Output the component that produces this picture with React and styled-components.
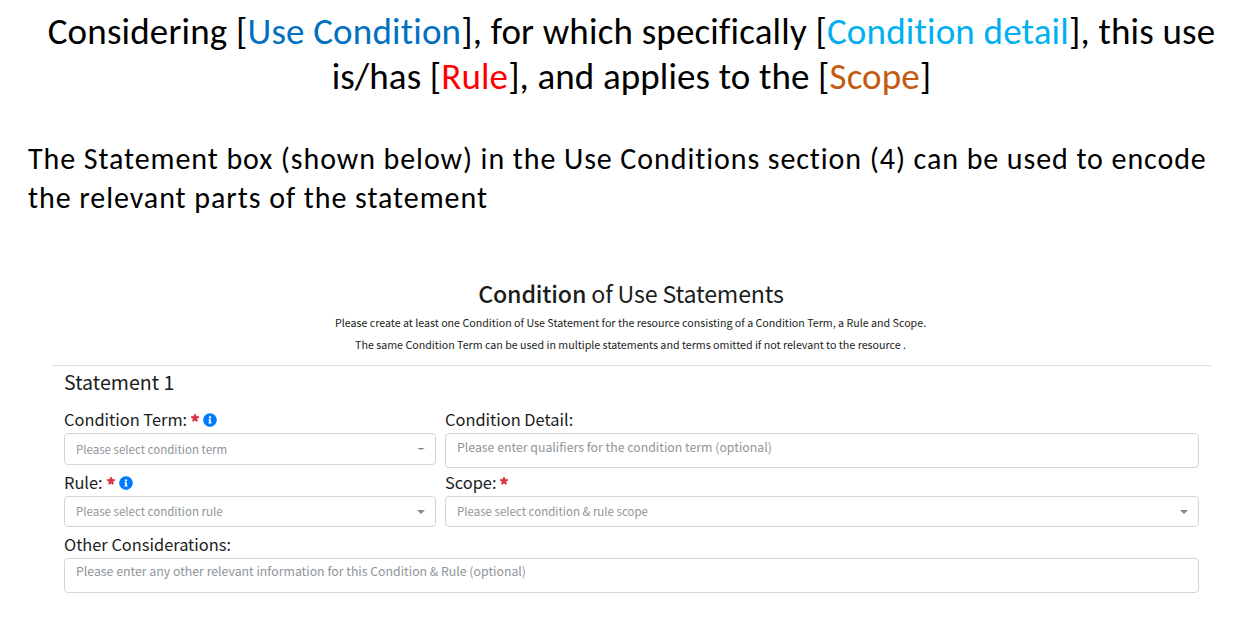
import React from 'react';
import styled, { createGlobalStyle } from 'styled-components';
import { FaInfoCircle } from 'react-icons/fa';

const GlobalStyle = createGlobalStyle`
  * { box-sizing: border-box; }
  body { margin: 0; background: #fff; }
`;

const Page = styled.main`
  width: 1241px;
  height: 618px;
  overflow: hidden;
  background: #fff;
  color: #000;
  font-family: Carlito, Calibri, Lato, sans-serif;
  font-variant-ligatures: none;
`;

const Template = styled.h1`
  margin: 0;
  padding: 9px 0 0 22px;
  font-size: 37px;
  font-weight: 400;
  line-height: 45px;
  text-align: center;
  white-space: nowrap;
`;

const Line = styled.span`
  display: block;
  letter-spacing: ${(p) => p.$spacing || '0'};
`;

const Slot = styled.span`
  color: ${(p) => p.$color};
`;

const Intro = styled.p`
  margin: 40px 0 0;
  padding-left: 28px;
  font-size: 30px;
  line-height: 39px;
  white-space: nowrap;
`;

const Form = styled.section`
  margin: 61px 0 0 52px;
  width: 1159px;
  font-family: 'Noto Sans CJK JP', 'Open Sans', sans-serif;
  color: #1a1d20;
`;

const FormHeader = styled.header`
  height: 88px;
  border-bottom: 1px solid #dedfe0;
  text-align: center;
  white-space: nowrap;
`;

const FormTitle = styled.h2`
  margin: 0 1px 0 0;
  padding-bottom: 3px;
  font-size: 23.2px;
  font-weight: 400;
  line-height: 31px;
  letter-spacing: -0.17px;
`;

const Strong = styled.span`
  font-weight: 500;
`;

const Hint = styled.p`
  margin: 0 2px 0 0;
  font-size: 10.68px;
  line-height: 22px;
`;

const FormBody = styled.div`
  padding: 0 12px;
`;

const StatementTitle = styled.h3`
  margin: 0;
  height: 39px;
  font-size: 19.6px;
  font-weight: 400;
  line-height: 31px;
`;

const Row = styled.div`
  display: grid;
  grid-template-columns: ${(p) => (p.$single ? '1fr' : '372px 1fr')};
  column-gap: 9px;
  align-items: start;
  margin-top: ${(p) => (p.$single ? '3px' : 0)};
`;

const Label = styled.div`
  display: flex;
  align-items: center;
  height: 28px;
  font-size: 16.4px;
  line-height: 28px;
  white-space: nowrap;
`;

const Star = styled.svg`
  width: 8px;
  height: 8px;
  margin: -3px 0 0 4px;
  fill: #dc3545;
`;

const Info = styled(FaInfoCircle)`
  width: 14px;
  height: 14px;
  margin: 2px 0 0 4px;
  color: #007bff;
`;

const Control = styled.div`
  display: flex;
  justify-content: space-between;
  height: ${(p) => p.$height};
  padding: 0 10px 0 11px;
  border: 1px solid #d3d6d9;
  border-radius: 4px;
  color: #8f959a;
  font-size: ${(p) => p.$size};
  line-height: ${(p) => p.$line};
  white-space: nowrap;
`;

const Caret = styled.span`
  align-self: center;
  width: 0;
  height: 0;
  border: solid transparent;
  border-width: ${(p) => (p.$flat ? '2px' : '4px')} 4px 0;
  border-top-color: #8a8a8a;
`;

const Required = () => (
  <Star viewBox="0 0 24 24" aria-hidden="true">
    <path d="M9 1h6l1 6 7-1 1 5-6 3 3 6-5 3-4-4-4 4-5-3 3-6-6-3 1-5 7 1z" />
  </Star>
);

function Select({ label, info, flat, line = '29px', height = '31px', children }) {
  return (
    <div>
      <Label>{label}<Required />{info && <Info />}</Label>
      <Control $height={height} $size="11.5px" $line={line}>
        {children}
        <Caret $flat={flat} />
      </Control>
    </div>
  );
}

function TextField({ label, line = '26px', children }) {
  return (
    <div>
      <Label>{label}</Label>
      <Control $height="35px" $size="12.32px" $line={line}>{children}</Control>
    </div>
  );
}

export default function App() {
  return (
    <Page>
      <GlobalStyle />
      <Template>
        <Line $spacing="0.18px">
          Considering [<Slot $color="#0070c0">Use Condition</Slot>], for which specifically [
          <Slot $color="#00b0f0">Condition detail</Slot>], this use
        </Line>
        <Line $spacing="0.12px">
          is/has [<Slot $color="#ff0000">Rule</Slot>], and applies to the [
          <Slot $color="#c55a11">Scope</Slot>]
        </Line>
      </Template>
      <Intro>
        <Line $spacing="0.92px">The Statement box (shown below) in the Use Conditions section (4) can be used to encode</Line>
        <Line $spacing="0.95px">the relevant parts of the statement</Line>
      </Intro>
      <Form>
        <FormHeader>
          <FormTitle><Strong>Condition</Strong> of Use Statements</FormTitle>
          <Hint>Please create at least one Condition of Use Statement for the resource consisting of a Condition Term, a Rule and Scope.</Hint>
          <Hint>The same Condition Term can be used in multiple statements and terms omitted if not relevant to the resource .</Hint>
        </FormHeader>
        <FormBody>
          <StatementTitle>Statement 1</StatementTitle>
          <Row>
            <Select label="Condition Term:" info flat line="31px" height="32px">Please select condition term</Select>
            <TextField label="Condition Detail:">Please enter qualifiers for the condition term (optional)</TextField>
          </Row>
          <Row>
            <Select label="Rule:" info>Please select condition rule</Select>
            <Select label="Scope:">Please select condition &amp; rule scope</Select>
          </Row>
          <Row $single>
            <TextField label="Other Considerations:" line="25px">Please enter any other relevant information for this Condition &amp; Rule (optional)</TextField>
          </Row>
        </FormBody>
      </Form>
    </Page>
  );
}
